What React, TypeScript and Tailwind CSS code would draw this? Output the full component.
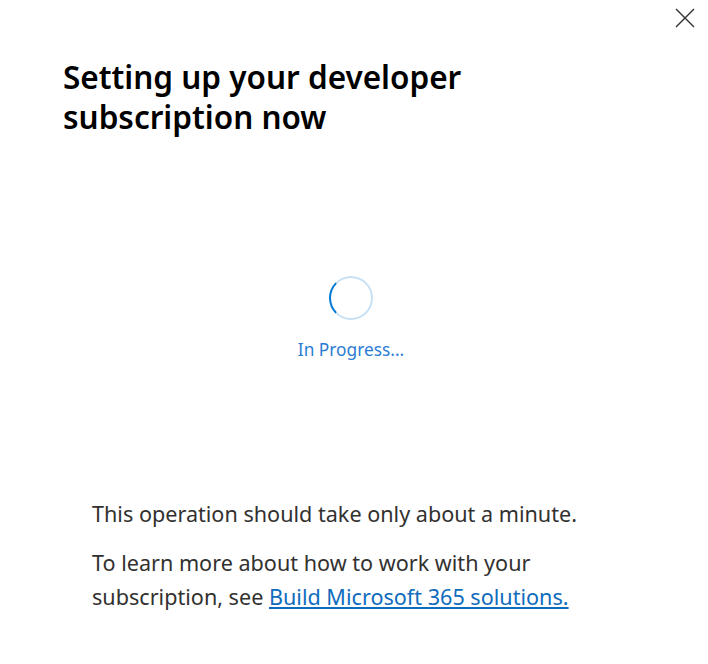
export default function App() {
  return (
    <div
      className="relative h-[664px] w-[708px] bg-white"
      style={{ fontFamily: '"Segoe UI", "Noto Sans", sans-serif' }}
    >
      <button className="absolute left-[675px] top-[8px] text-[#323130]">
        <svg width="20" height="20" viewBox="0 0 20 20" fill="none" stroke="currentColor" strokeWidth="1.4">
          <path d="M1 1L19 19M19 1L1 19" />
        </svg>
      </button>

      <div className="flex h-full flex-col">
        <h1 className="pl-[63px] pt-[57px] text-[31.5px] font-semibold leading-[40px] text-black">
          Setting up your developer
          <br />
          subscription now
        </h1>

        <div className="mt-[139px] flex flex-col items-center pr-[6px]">
          <div className="h-[44px] w-[44px] rounded-full border-2 border-[#c7e0f4] border-l-[#0078d4]" />
          <div className="mt-[17px] text-[17.3px] text-[#2b7cd3]">In Progress...</div>
        </div>

        <div className="mt-[134px] pl-[92px] text-[21.6px] leading-[34px] text-[#323130]">
          <p>This operation should take only about a minute.</p>
          <p className="mt-[15px]">
            To learn more about how to work with your
            <br />
            subscription, see{' '}
            <a href="#" className="text-[#0f6cbd] underline">
              Build Microsoft 365 solutions.
            </a>
          </p>
        </div>
      </div>
    </div>
  )
}
